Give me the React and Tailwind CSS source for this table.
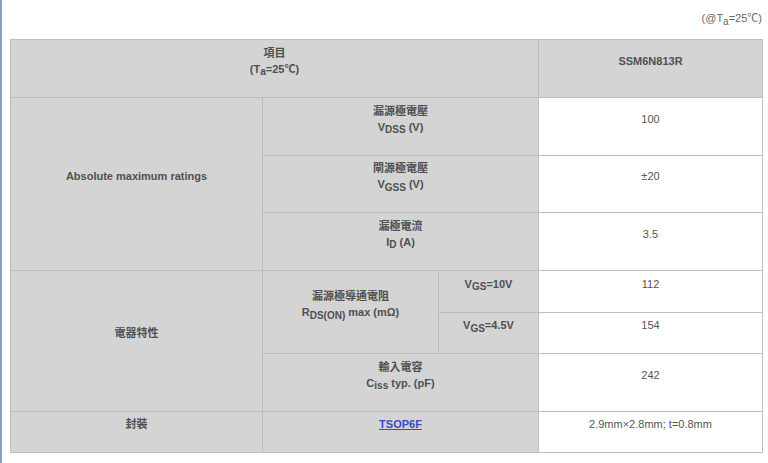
import React from "react";

const font = { fontFamily: '"Liberation Sans", Arial, "Noto Sans CJK TC", sans-serif' };

const G = "bg-[#d4d4d4] border border-[#bdbdbd] text-center align-middle pt-[4px] pb-[20px] px-2 font-bold text-[#505050]";
const W = "bg-white border border-[#bdbdbd] text-center align-middle pt-[4px] pb-[20px] px-2 text-[#555555]";
const S = "text-[10px]";

export default function App() {
  return (
    <div className="w-[768px] h-[463px] bg-white flex text-[11px] leading-[16px]" style={font}>
      <div className="w-[2px] h-full bg-[#8d9dbd] shrink-0" />
      <div className="pl-[8px] pt-[10px]">
        <div className="w-[752px] text-right text-[#666666] mb-[13px]">
          (@T<sub className={S}>a</sub>=25℃)
        </div>
        <table className="w-[752px] table-fixed border-collapse">
          <colgroup>
            <col className="w-[252px]" />
            <col className="w-[176px]" />
            <col className="w-[100px]" />
            <col className="w-[224px]" />
          </colgroup>
          <tbody>
            <tr className="h-[58px]">
              <th colSpan={3} className={G}>
                項目<br />(T<sub className={S}>a</sub>=25℃)
              </th>
              <th className={G}>SSM6N813R</th>
            </tr>
            <tr className="h-[58px]">
              <td rowSpan={3} className={G}>Absolute maximum ratings</td>
              <td colSpan={2} className={G}>
                漏源極電壓<br />V<sub className={S}>DSS</sub> (V)
              </td>
              <td className={W}>100</td>
            </tr>
            <tr className="h-[57px]">
              <td colSpan={2} className={G}>
                閘源極電壓<br />V<sub className={S}>GSS</sub> (V)
              </td>
              <td className={W}>±20</td>
            </tr>
            <tr className="h-[58px]">
              <td colSpan={2} className={G}>
                漏極電流<br />I<sub className={S}>D</sub> (A)
              </td>
              <td className={W}>3.5</td>
            </tr>
            <tr className="h-[42px]">
              <td rowSpan={3} className={G}>電器特性</td>
              <td rowSpan={2} className={G}>
                漏源極導通電阻<br />R<sub className={S}>DS(ON)</sub> max (mΩ)
              </td>
              <td className={G}>
                V<sub className={S}>GS</sub>=10V
              </td>
              <td className={W}>112</td>
            </tr>
            <tr className="h-[41px]">
              <td className={G}>
                V<sub className={S}>GS</sub>=4.5V
              </td>
              <td className={W}>154</td>
            </tr>
            <tr className="h-[58px]">
              <td colSpan={2} className={G}>
                輸入電容<br />C<sub className={S}>iss</sub> typ. (pF)
              </td>
              <td className={W}>242</td>
            </tr>
            <tr className="h-[41px]">
              <td className={G}>封裝</td>
              <td colSpan={2} className={G}>
                <a href="#" className="text-[#3a4cc4] underline">TSOP6F</a>
              </td>
              <td className={W}>2.9mm×2.8mm; t=0.8mm</td>
            </tr>
          </tbody>
        </table>
      </div>
    </div>
  );
}
